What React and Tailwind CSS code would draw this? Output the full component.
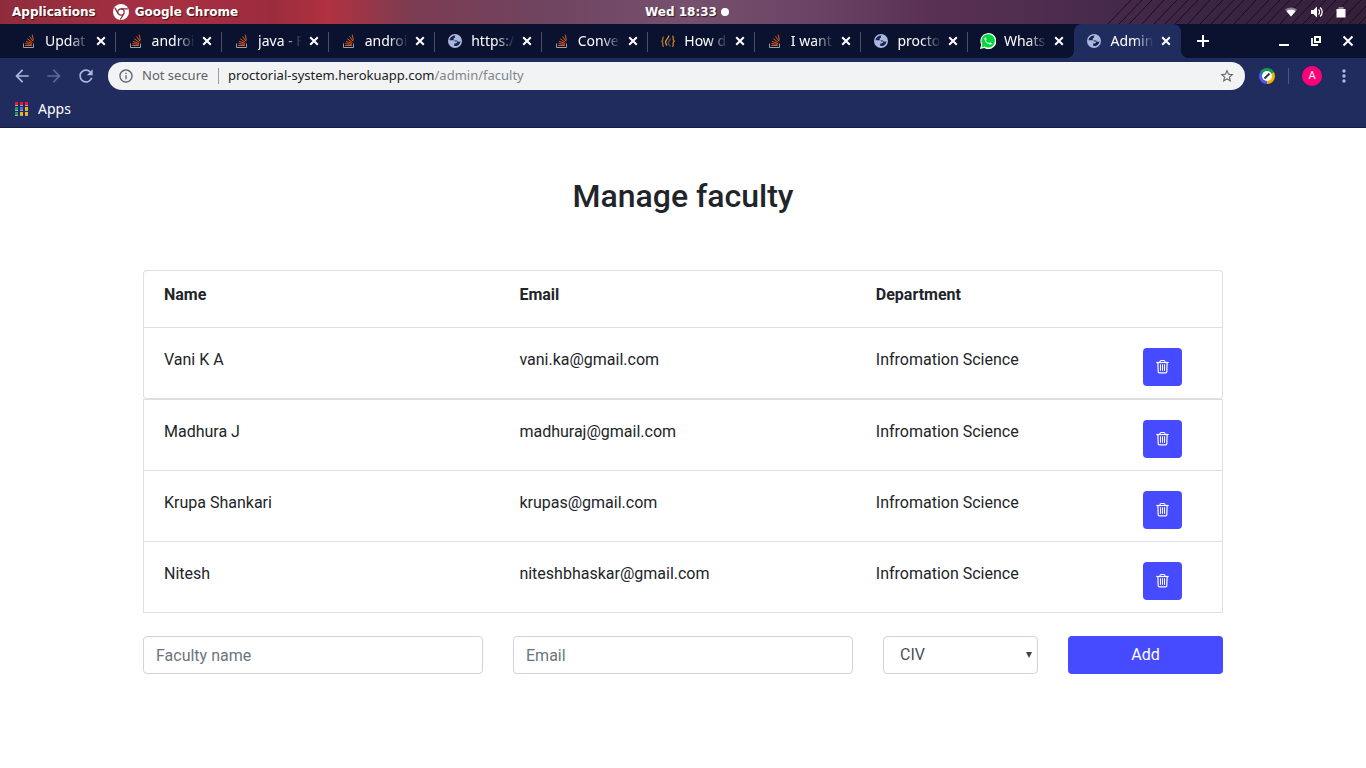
import React from "react";
import { MdRefresh, MdArrowBack, MdArrowForward, MdStarBorder, MdInfoOutline, MdMoreVert } from "react-icons/md";

function StackOverflowIcon() {
  return (
    <svg viewBox="0 0 16 16" className="size-4 shrink-0" fill="none" aria-hidden="true">
      <path d="M2.500 10.500v4h10v-4" stroke="#9a9eae" strokeWidth="1" />
      <path d="M4.200 12.500h6.600M4.300 10.600l6.500.8M4.900 8.300l6.100 2.200M6.300 5.800l5.100 3.600M8.500 3.400l3.500 4.800M11.200 1.600l1.200 5.800" stroke="#dc5a17" strokeWidth="1" />
    </svg>
  );
}

function GlobeIcon() {
  return (
    <svg viewBox="0 0 16 16" className="size-4 shrink-0" aria-hidden="true">
      <circle cx="8" cy="8" r="7" fill="#aab8e0" />
      <path
        d="M8.600 2.400C5.700 2.300 3 4.200 2.400 7.200h4.100c.9 0 1.300.5 1.400 1.300h2.300c0 1.300-.6 2-1.800 2H7.200v2.200c2.800.8 6.100-1.200 6.300-4.800-.5.6-1.100.8-1.900.8-.9 0-1.300-.4-1.500-1.200H8c-.9 0-1.400-.5-1.400-1.400 0-.8.5-1.300 1.300-1.400V3.400c0-.4.3-.8.7-1z"
        fill="#17224c"
      />
    </svg>
  );
}

function BracesIcon() {
  return (
    <svg viewBox="0 0 16 16" className="size-4 shrink-0" fill="none" strokeWidth="1.200" aria-hidden="true">
      <path d="M3.800 4C2.200 4 3.200 6.600 2.600 7.600c-.3.500-.8.8-1.300.9.500.1 1 .4 1.300.9.600 1-.4 4.100 1.200 4.100" stroke="#b87a20" />
      <path d="M12.200 3c1.600 0 .7 3.200 1.200 4.200.3.500.8.8 1.300.9-.5.1-1 .4-1.300.9-.6 1 .4 4.500-1.200 4.500" stroke="#e08a1c" />
      <path d="M8.800 2.500C9 5.300 5.600 6.400 5.600 9.300c0 1.500.7 2.400 1.500 3.200" stroke="#f29a1f" />
      <path d="M10.300 5.500C10.500 7.500 8.100 8.300 8.200 10c0 1.400 1.600 1.700 2 3.500" stroke="#5c5a62" />
    </svg>
  );
}

function WhatsAppIcon() {
  return (
    <svg viewBox="0 0 16 16" className="size-4 shrink-0" aria-hidden="true">
      <path d="M0 16l1.200-4.300A8 8 0 1 1 4.300 15z" fill="#fff" />
      <path d="M1.500 14.500l.9-3.200A6.700 6.700 0 1 1 4.700 13.600z" fill="#00d93d" />
      <path d="M5.600 4.200c-.9.3-1.300 1.100-1.100 2.100.6 2.600 2.700 4.700 5.300 5.300 1 .2 1.800-.4 2-1.400l-1.900-1-.9 1C7.500 9.700 6.500 8.700 5.800 7.200l.8-.9z" fill="#fff" />
    </svg>
  );
}

function ChromeIcon() {
  return (
    <svg viewBox="0 0 16 16" className="size-4 shrink-0" fill="none" aria-hidden="true">
      <circle cx="8" cy="8" r="8" fill="#fff" />
      <circle cx="8" cy="8" r="3.200" stroke="#8c2b38" strokeWidth="1.200" />
      <path d="M8 4.800h6.800M5.200 9.600L1.900 3.900M10.800 9.600l-3.400 5.900" stroke="#8c2b38" strokeWidth="1.200" />
    </svg>
  );
}

function CloseIcon() {
  return (
    <svg viewBox="0 0 16 16" className="size-4" fill="none" stroke="currentColor" strokeWidth="2" aria-hidden="true">
      <path d="M4.200 4.200l7.600 7.600M11.800 4.200l-7.600 7.600" />
    </svg>
  );
}

function TrashIcon() {
  return (
    <svg viewBox="0 0 13 16" className="h-4 w-[13px]" fill="none" stroke="#fff" aria-hidden="true">
      <path d="M.3 3.500h12.400" strokeWidth="1.200" />
      <path d="M4 3.300v-.6c0-.8.400-1.200 1.200-1.200h2.600c.8 0 1.200.4 1.200 1.200v.6" strokeWidth="1.100" />
      <path d="M1.900 3.700l.3 9c0 .7.400 1.100 1.100 1.100h6.400c.7 0 1.100-.4 1.100-1.100l.3-9" strokeWidth="1.200" />
      <path d="M4.500 5.300v6.500M6.500 5.300v6.500M8.500 5.300v6.500" strokeWidth="1" />
    </svg>
  );
}

const tabs = [
  { title: "Updat", icon: StackOverflowIcon },
  { title: "androi", icon: StackOverflowIcon },
  { title: "java - F", icon: StackOverflowIcon },
  { title: "androi", icon: StackOverflowIcon },
  { title: "https:/", icon: GlobeIcon },
  { title: "Conve", icon: StackOverflowIcon },
  { title: "How d", icon: BracesIcon },
  { title: "I want", icon: StackOverflowIcon },
  { title: "procto", icon: GlobeIcon },
  { title: "Whats", icon: WhatsAppIcon },
  { title: "Admin", icon: GlobeIcon, active: true },
];

function SystemBar() {
  return (
    <div className="relative h-6 bg-[linear-gradient(90deg,#8f2c3c_0%,#a83043_12%,#9c2c3d_20%,#b0313f_24%,#7d3c52_30%,#6f4460_40%,#76506e_50%,#6a4364_60%,#5a3154_68%,#4b2c4e_78%,#3c2444_88%,#35203a_100%)]">
      <svg className="absolute inset-y-0 right-0 h-6 w-[260px]" aria-hidden="true">
        <defs>
          <pattern id="wires" width="46" height="24" patternUnits="userSpaceOnUse">
            <path d="M-23 24L0 0M-10 24L12 0M2 24L25 0M13 24L36 0M23 24L46 0M36 24L58 0" stroke="#130c1e" strokeWidth="1" />
          </pattern>
        </defs>
        <path d="M0 24L23 0H260V24z" fill="url(#wires)" />
      </svg>
      <div className="relative grid h-full grid-cols-3 items-center px-3 font-['DejaVu_Sans',sans-serif] text-xs font-bold text-white [text-shadow:1px_1px_1px_rgba(0,0,0,0.6)]">
        <div className="flex items-center gap-[17px]">
          <span>Applications</span>
          <span className="flex items-center gap-1.5">
            <ChromeIcon />
            Google Chrome
          </span>
        </div>
        <div className="flex items-center justify-center gap-1 pl-2">
          Wed 18:33
          <span className="size-2 rounded-full bg-white" />
        </div>
        <div className="flex items-center justify-end gap-3 pr-2">
          <svg viewBox="0 0 14 12" className="h-3 w-[14px]" aria-label="Wi-Fi">
            <path d="M1 3.500C4.500.8 9.500.8 13 3.500L7 10.500z" fill="#8b7c92" />
            <path d="M2.500 5.200C5 3.300 9 3.300 11.500 5.200L7 10.500z" fill="#fff" />
          </svg>
          <svg viewBox="0 0 14 14" className="size-[14px]" fill="none" aria-label="Volume">
            <path d="M1 5h2.500L7 1.500v11L3.500 9H1z" fill="#fff" />
            <path d="M8.500 4.500c1.300 1.300 1.300 3.700 0 5M10 2.500c3 2.500 3 6.500 0 9" stroke="#fff" strokeWidth="1.300" />
          </svg>
          <svg viewBox="0 0 10 12" className="h-3 w-[10px]" aria-label="Battery">
            <path d="M2.500 1h5v2h-5z" fill="#91829a" />
            <path d="M.5 3h9v8.500h-9z" fill="#fff" />
          </svg>
        </div>
      </div>
    </div>
  );
}

function TabStrip() {
  return (
    <div className="flex h-[34px] bg-[#0b1230] pl-[9px]">
      <div role="tablist" className="flex min-w-0 flex-1">
        {tabs.map(({ title, icon: Icon, active }, i) => (
          <div
            key={i}
            className={
              "relative flex min-w-0 flex-1 items-center gap-2 pr-[7px] pl-3 " +
              (active ? "rounded-t-lg bg-[#202c5e]" : "")
            }
          >
            {active && (
              <>
                <span className="absolute bottom-0 -left-2 size-2 bg-[radial-gradient(circle_at_0_0,#0b1230_8px,#202c5e_8px)]" />
                <span className="absolute -right-2 bottom-0 size-2 bg-[radial-gradient(circle_at_100%_0,#0b1230_8px,#202c5e_8px)]" />
              </>
            )}
            <Icon />
            <button
              role="tab"
              aria-selected={!!active}
              className="min-w-0 flex-1 text-left text-sm whitespace-nowrap text-white [mask-image:linear-gradient(90deg,#000_55%,transparent)]"
            >
              {title}
            </button>
            <button aria-label="Close tab" className="-ml-1 text-white">
              <CloseIcon />
            </button>
            {!active && i < tabs.length - 2 && <span className="absolute top-2 right-0 h-5 w-px bg-[#4b5068]" />}
          </div>
        ))}
      </div>
      <div className="flex w-[185px] items-center justify-between pr-[10px] pl-[14px] text-white">
        <button aria-label="New tab">
          <svg viewBox="0 0 16 16" className="size-4" stroke="currentColor" strokeWidth="2" aria-hidden="true">
            <path d="M8 2v12M2 8h12" />
          </svg>
        </button>
        <div className="flex items-center gap-4">
          <button aria-label="Minimize">
            <svg viewBox="0 0 16 16" className="size-4" stroke="currentColor" strokeWidth="2" aria-hidden="true">
              <path d="M3 12h10" />
            </svg>
          </button>
          <button aria-label="Restore">
            <svg viewBox="0 0 16 16" className="size-4" fill="none" stroke="currentColor" aria-hidden="true">
              <path d="M7 4h5v5H7z" strokeWidth="2" />
              <path d="M4 5v7h6" strokeWidth="1.800" />
            </svg>
          </button>
          <button aria-label="Close window">
            <svg viewBox="0 0 16 16" className="size-4" stroke="currentColor" strokeWidth="2" aria-hidden="true">
              <path d="M3.500 3.500l9 9M12.500 3.500l-9 9" />
            </svg>
          </button>
        </div>
      </div>
    </div>
  );
}

function Toolbar() {
  return (
    <div className="flex h-9 items-center bg-[#202c5e] pr-3 pl-3 text-[#aab8e0]">
      <div className="flex w-24 items-center gap-3">
        <button aria-label="Back"><MdArrowBack size={20} /></button>
        <button aria-label="Forward" className="text-[#5c6894]"><MdArrowForward size={20} /></button>
        <button aria-label="Reload"><MdRefresh size={20} /></button>
      </div>
      <div className="flex h-7 flex-1 items-center rounded-full bg-[#f1f3f4] pr-2.5 pl-2.5 text-[13px] text-[#5f6368]">
        <MdInfoOutline size={16} />
        <span className="ml-2">Not secure</span>
        <span className="mr-[9px] ml-2.5 h-4 w-px bg-[#9a9da1]" />
        <span className="flex-1 text-[#80868b]">
          <span className="text-[#202124]">proctorial-system.herokuapp.com</span>/admin/faculty
        </span>
        <button aria-label="Bookmark this page"><MdStarBorder size={16} /></button>
      </div>
      <button aria-label="Extension" className="ml-[14px]">
        <svg viewBox="0 0 16 16" className="size-4" fill="none" aria-hidden="true">
          <path d="M8 8L1.100 4A8 8 0 0 1 14.900 4z" fill="#0f9d58" />
          <path d="M8 8l6.900-4A8 8 0 0 1 8 16z" fill="#f4b400" />
          <path d="M8 8v8A8 8 0 0 1 1.100 4z" fill="#4a5cf0" />
          <circle cx="8" cy="8" r="5" fill="#fff" />
          <path d="M5.500 10.500l5-5" stroke="#333" strokeWidth="2" />
        </svg>
      </button>
      <span className="mx-[13px] h-4 w-px bg-[#4a5686]" />
      <button className="flex size-5 items-center justify-center rounded-full bg-[#ff0078] font-[Roboto,sans-serif] text-[11px] text-white">A</button>
      <button aria-label="Menu" className="ml-3"><MdMoreVert size={20} /></button>
    </div>
  );
}

const appColors = [
  "bg-[#ff1030]", "bg-[#ff1030]", "bg-[#ff1030]",
  "bg-[#18a15b]", "bg-[#3c78f0]", "bg-[#f5b400]",
  "bg-[#18a15b]", "bg-[#f5b400]", "bg-[#f5b400]",
];

function BookmarksBar() {
  return (
    <div className="flex h-[34px] items-center border-b border-[#141c42] bg-[#202c5e] px-[15px] pb-1">
      <a href="#apps" className="flex items-center gap-2.5 text-sm text-white">
        <span className="grid grid-cols-3 gap-x-0.5 gap-y-px">
          {appColors.map((c, i) => (
            <span key={i} className={"h-1 w-[3px] border-b border-[#a3a9bd] " + c} />
          ))}
        </span>
        Apps
      </a>
    </div>
  );
}

const faculty = [
  { name: "Vani K A", email: "vani.ka@gmail.com", department: "Infromation Science" },
  { name: "Madhura J", email: "madhuraj@gmail.com", department: "Infromation Science" },
  { name: "Krupa Shankari", email: "krupas@gmail.com", department: "Infromation Science" },
  { name: "Nitesh", email: "niteshbhaskar@gmail.com", department: "Infromation Science" },
];

function FacultyTable() {
  const head = "border-t border-[#dfdfdf] pt-3 pb-5 pl-5 text-left font-bold";
  return (
    <table className="w-full table-fixed border-separate border-spacing-0">
      <colgroup>
        <col className="w-[33%]" />
        <col className="w-[33%]" />
        <col />
        <col className="w-[100px]" />
      </colgroup>
      <thead>
        <tr>
          <th className={head + " rounded-tl border-l"}>Name</th>
          <th className={head}>Email</th>
          <th className={head}>Department</th>
          <td className="rounded-tr border-t border-r border-[#dfdfdf]" />
        </tr>
      </thead>
      <tbody>
        {faculty.map((f, i) => {
          const closing = i === 0 || i === faculty.length - 1;
          const cell = "border-t border-[#dfdfdf] pt-5 pb-3 align-top " + (closing ? "border-b " : "");
          return (
            <tr key={f.email}>
              <td className={cell + "border-l pl-5 " + (i === 0 ? "rounded-bl" : "")}>{f.name}</td>
              <td className={cell + "pl-5"}>{f.email}</td>
              <td className={cell + "pl-5"}>{f.department}</td>
              <td className={cell + "border-r pl-5 " + (i === 0 ? "rounded-br" : "")}>
                <button
                  aria-label={"Delete " + f.name}
                  className="flex h-[38px] w-[39px] items-center justify-center rounded bg-[#474bff]"
                >
                  <TrashIcon />
                </button>
              </td>
            </tr>
          );
        })}
      </tbody>
    </table>
  );
}

function AddFacultyForm() {
  const field =
    "h-[38px] w-full rounded border border-[#ced4da] bg-white px-3 text-[#495057] placeholder:text-[#6c757d]";
  return (
    <form className="mt-[23px] grid grid-cols-12 gap-x-[30px]" onSubmit={(e) => e.preventDefault()}>
      <div className="col-span-4">
        <input aria-label="Faculty name" placeholder="Faculty name" className={field} />
      </div>
      <div className="col-span-4">
        <input type="email" aria-label="Email" placeholder="Email" className={field} />
      </div>
      <div className="relative col-span-2">
        <select aria-label="Department" className={field + " appearance-none pl-4"}>
          <option>CIV</option>
        </select>
        <svg viewBox="0 0 6 6" className="pointer-events-none absolute top-4 right-1.5 size-1.5" aria-hidden="true">
          <path d="M0 0h6L3 6z" fill="#3d444b" />
        </svg>
      </div>
      <button type="submit" className="col-span-2 h-[38px] rounded bg-[#474bff] text-white">
        Add
      </button>
    </form>
  );
}

export default function App() {
  return (
    <div className="min-h-screen bg-white">
      <header className="font-['Noto_Sans',sans-serif]">
        <SystemBar />
        <TabStrip />
        <Toolbar />
        <BookmarksBar />
      </header>
      <main className="mx-auto max-w-[1080px] pt-12 font-[Roboto,sans-serif] text-base text-[#212529]">
        <h1 className="mb-[54px] text-center text-[32px] leading-10 font-medium">Manage faculty</h1>
        <FacultyTable />
        <AddFacultyForm />
      </main>
    </div>
  );
}
